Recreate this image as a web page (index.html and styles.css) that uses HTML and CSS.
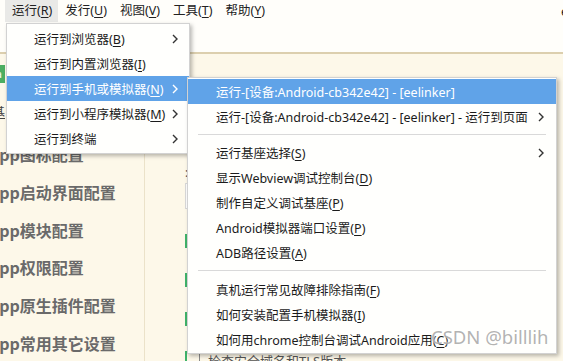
FILE: index.html
```html
<!DOCTYPE html>
<html lang="zh-CN">
<head>
  <meta charset="UTF-8">
  <title>HBuilderX 运行菜单</title>
  <link rel="stylesheet" href="styles.css">
</head>
<body>
  <div class="app">
    <div class="topbar">
      <div class="menubar">
        <span class="mb-item open">运行(<u>R</u>)</span>
        <span class="mb-item">发行(<u>U</u>)</span>
        <span class="mb-item">视图(<u>V</u>)</span>
        <span class="mb-item">工具(<u>T</u>)</span>
        <span class="mb-item">帮助(<u>Y</u>)</span>
        <span class="mb-title">e</span>
      </div>
    </div>

    <div class="main">
      <div class="sidebar">
        <div class="side-head">
          <span class="tag">na</span>
          <span class="link">基</span>
        </div>
        <ul class="side-list">
          <li>App图标配置</li>
          <li>App启动界面配置</li>
          <li>App模块配置</li>
          <li>App权限配置</li>
          <li>App原生插件配置</li>
          <li>App常用其它设置</li>
        </ul>
      </div>

      <div class="content">
        <div class="label">:</div>
        <div class="input"></div>
        <div class="rows">
          <div class="row"><span class="bar"></span></div>
          <div class="row"><span class="bar"></span></div>
          <div class="row"><span class="bar"></span></div>
          <div class="row"><span class="bar"></span><span class="row-text">检查安全域名和TLS版本</span></div>
        </div>
      </div>
    </div>

    <!-- 运行 下拉菜单 -->
    <div class="menu menu-run">
      <div class="menu-item"><span>运行到浏览器(<u>B</u>)</span><svg class="chev" width="6" height="10" viewBox="0 0 6 10"><path d="M1 1l4 4-4 4"/></svg></div>
      <div class="menu-item"><span>运行到内置浏览器(<u>I</u>)</span></div>
      <div class="menu-item active"><span>运行到手机或模拟器(<u>N</u>)</span><svg class="chev" width="6" height="10" viewBox="0 0 6 10"><path d="M1 1l4 4-4 4"/></svg></div>
      <div class="menu-item"><span>运行到小程序模拟器(<u>M</u>)</span><svg class="chev" width="6" height="10" viewBox="0 0 6 10"><path d="M1 1l4 4-4 4"/></svg></div>
      <div class="menu-item"><span>运行到终端</span><svg class="chev" width="6" height="10" viewBox="0 0 6 10"><path d="M1 1l4 4-4 4"/></svg></div>
    </div>

    <!-- 子菜单 -->
    <div class="menu menu-device">
      <div class="menu-item active"><span>运行-[设备:Android-cb342e42] - [eelinker]</span></div>
      <div class="menu-item"><span>运行-[设备:Android-cb342e42] - [eelinker] - 运行到页面</span><svg class="chev" width="6" height="10" viewBox="0 0 6 10"><path d="M1 1l4 4-4 4"/></svg></div>
      <div class="menu-sep"></div>
      <div class="menu-item"><span>运行基座选择(<u>S</u>)</span><svg class="chev" width="6" height="10" viewBox="0 0 6 10"><path d="M1 1l4 4-4 4"/></svg></div>
      <div class="menu-item"><span>显示Webview调试控制台(<u>D</u>)</span></div>
      <div class="menu-item"><span>制作自定义调试基座(<u>P</u>)</span></div>
      <div class="menu-item"><span>Android模拟器端口设置(<u>P</u>)</span></div>
      <div class="menu-item"><span>ADB路径设置(<u>A</u>)</span></div>
      <div class="menu-sep sep-b"></div>
      <div class="menu-item"><span>真机运行常见故障排除指南(<u>F</u>)</span></div>
      <div class="menu-item"><span>如何安装配置手机模拟器(<u>I</u>)</span></div>
      <div class="menu-item"><span>如何用chrome控制台调试Android应用(<u>C</u>)</span></div>
    </div>

    <div class="watermark">CSDN @billlih</div>
  </div>
</body>
</html>
```

FILE: styles.css
```css
:root {
  --bar-bg: #fffefa;
  --page-bg: #fdf8e9;
  --line: #dccfae;
  --menu-bg: #fffffd;
  --hover: #60a3e8;
  --text: #1b1b1b;
  --green: #3fb36a;
}
* { box-sizing: border-box; margin: 0; padding: 0 }
html, body { width: 563px; height: 361px; overflow: hidden }
body {
  font-family: "Noto Sans", "Noto Sans CJK SC", sans-serif;
  font-size: 12.5px;
  color: var(--text);
  background: var(--page-bg);
}
u { text-decoration: underline; text-underline-offset: 2px }
.app {
  position: relative;
  width: 563px; height: 361px;
  display: flex; flex-direction: column;
  overflow: hidden;
}

/* top bar */
.topbar {
  height: 54px; flex-shrink: 0;
  background: var(--bar-bg);
  border-bottom: 2px solid var(--line);
}
.menubar {
  display: flex; align-items: center;
  height: 22px; padding-left: 5px;
}
.mb-item {
  height: 22px; line-height: 22px;
  padding: 0 6px 0 7px;
  color: #222;
}
.mb-item.open { background: #e9e9e7 }
.mb-title { margin-left: auto; margin-right: -5px; color: #222 }

/* main */
.main { flex: 1; display: flex; min-height: 0; overflow: hidden }
.sidebar {
  width: 156px; margin-left: -11px;
  border-right: 1px solid #ebe2c9;
  flex-shrink: 0;
}
.side-head { padding-top: 11px; height: 82px }
.tag {
  display: block; width: 16px; height: 18px;
  background: #4cae62; color: #fff;
  font-size: 11px; line-height: 18px; overflow: hidden;
}
.link {
  display: block; margin-top: 21px;
  width: 16px; text-align: right;
  font-size: 13px;
  color: #444; text-decoration: underline;
  line-height: 17px;
}
.side-list { list-style: none }
.side-list li {
  height: 37.8px; line-height: 37.8px;
  font-family: "Noto Sans CJK SC", sans-serif;
  font-size: 16px; font-weight: 600;
  color: #6a6a6a; white-space: nowrap;
}

.content { flex: 1; padding: 112px 0 0 40px }
.label { font-size: 12px; line-height: 14px; color: #555 }
.input {
  margin-top: 3px; height: 26px; width: 200px;
  border: 1px solid #d8d8d8; background: #fff;
}
.rows { margin-top: 25px }
.row { height: 39px; display: flex; align-items: flex-start }
.bar { width: 2px; height: 14px; background: var(--green); flex-shrink: 0 }
.row-text {
  margin: 2px 0 0 12px; padding-left: 8px;
  border-left: 1px solid #8a8a8a;
  font-size: 13px;
  color: #555; line-height: 16px; white-space: nowrap;
}

/* dropdown menus */
.menu {
  position: absolute;
  background: var(--menu-bg);
  border: 1px solid #d2d2d2;
  box-shadow: 2px 2px 4px rgba(0,0,0,0.28);
}
.menu-run { left: 6px; top: 23px; width: 184px; padding: 2px 0 }
.menu-device { left: 187px; top: 77px; width: 370px; padding: 1px 0; z-index: 2 }
.menu-item {
  display: flex; align-items: center; justify-content: space-between;
  height: 25px; padding: 0 11px 0 27px;
  white-space: nowrap;
}
.menu-device .menu-item { padding: 0 12px 0 28px }
.menu-item.active { background: var(--hover); color: #fff }
.chev path { fill: none; stroke: #333; stroke-width: 1.4 }
.menu-item.active .chev path { stroke: #fff }
.menu-sep {
  height: 1px; margin: 5px 10px;
  background: #d9d9d9;
}
.sep-b { margin: 5px 10px 6px }

.watermark {
  position: absolute; left: 431px; top: 325px;
  font-family: "Noto Sans", sans-serif;
  font-size: 18.5px; line-height: 24px;
  color: rgba(165,165,165,0.85);
  text-shadow: 0 0 2px #fff;
  z-index: 3;
}
```
